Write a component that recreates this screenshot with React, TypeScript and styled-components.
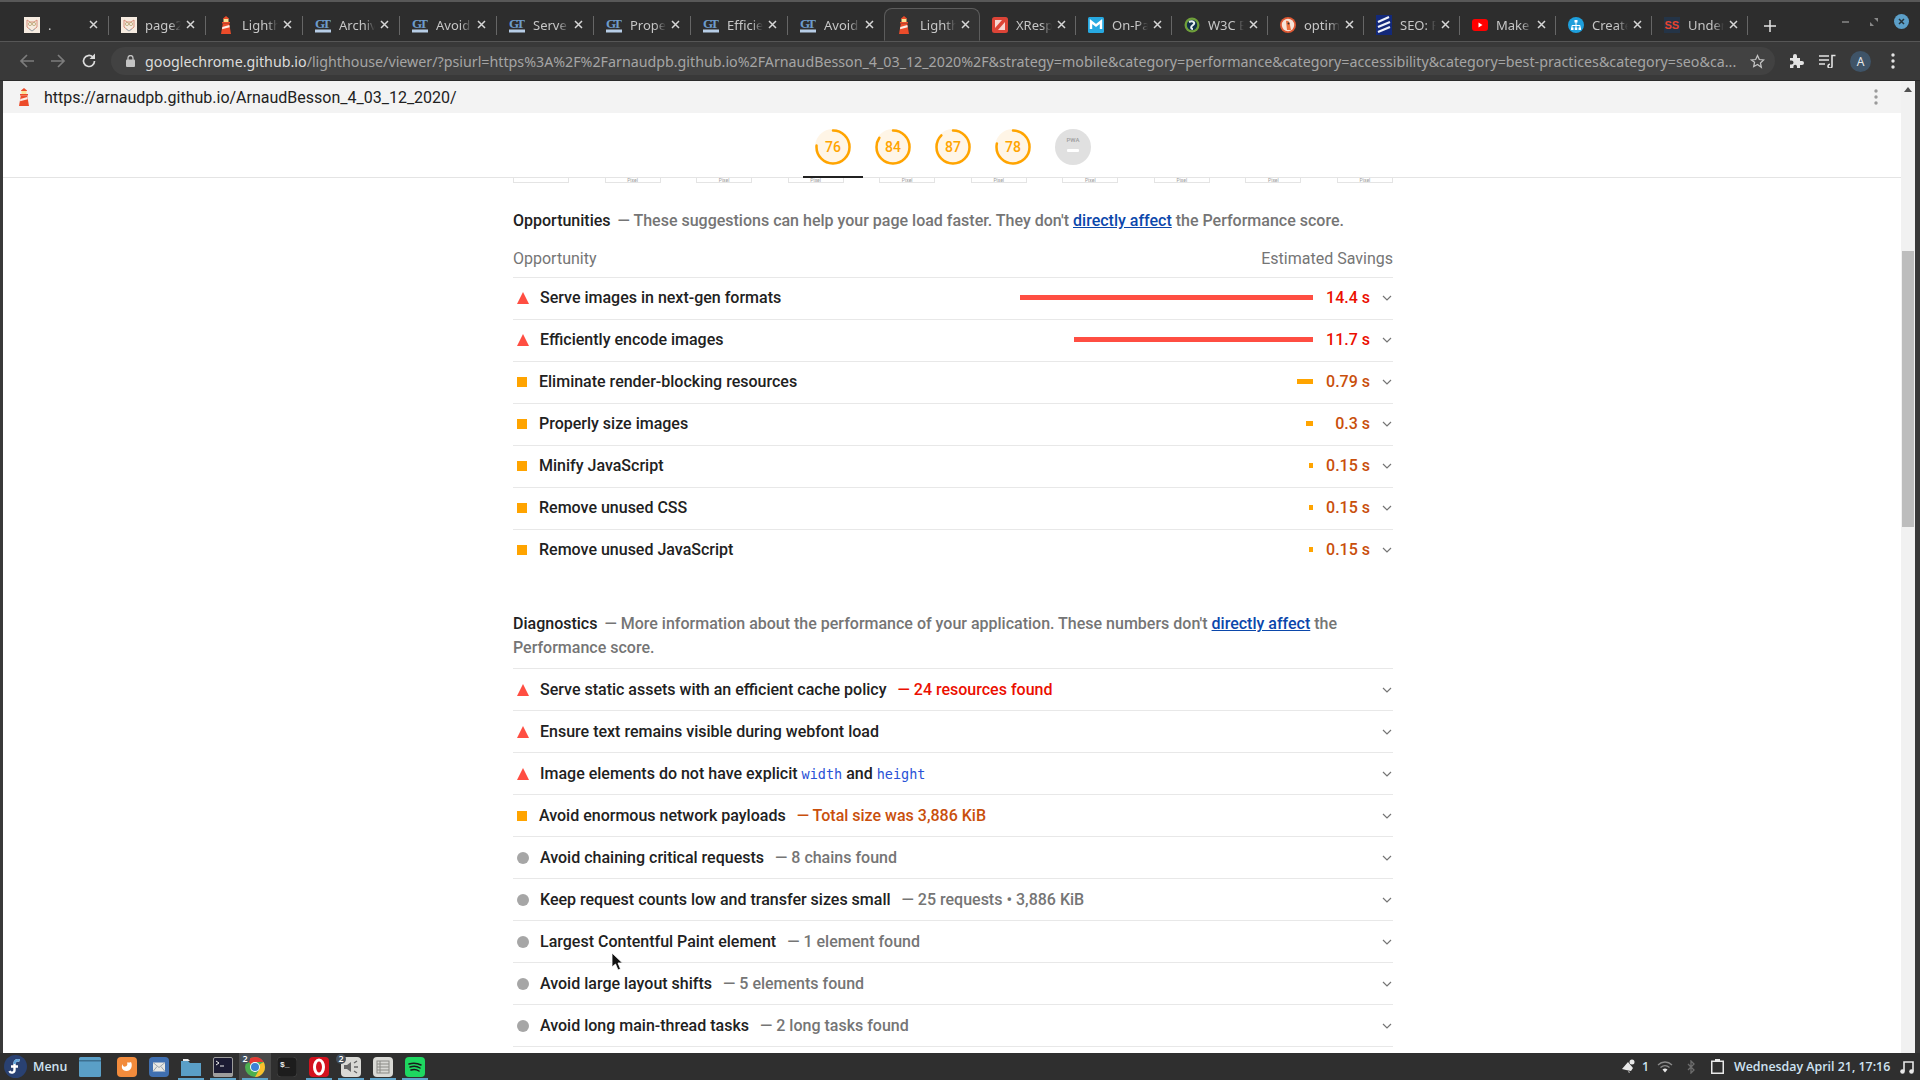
import React from "react";
import styled, { createGlobalStyle } from "styled-components";

const GlobalStyle = createGlobalStyle`
  html, body { margin: 0; padding: 0; height: 100%; overflow: hidden; background: #2d2d2d; }
  * { box-sizing: border-box; }
`;

type FaviconKind =
  | "owl" | "house" | "gt" | "xresp" | "moz" | "w3c" | "duck" | "seo" | "yt" | "create" | "ss";

const Favicon = ({ kind }: { kind: FaviconKind }) => {
  switch (kind) {
    case "owl":
      return (
        <svg width="16" height="16" viewBox="0 0 16 16">
          <rect width="16" height="16" fill="#f6ebe0" />
          <path d="M3 3l3 2h4l3-2v7l-5 4-5-4z" fill="none" stroke="#d9907c" strokeWidth="1" />
          <circle cx="6" cy="7" r="1.6" fill="none" stroke="#b7a472" strokeWidth="0.8" />
          <circle cx="10" cy="7" r="1.6" fill="none" stroke="#b7a472" strokeWidth="0.8" />
          <path d="M5 12l3 2 3-2" fill="none" stroke="#8fb8c8" strokeWidth="0.8" />
        </svg>
      );
    case "house":
      return (
        <svg width="14" height="18" viewBox="0 0 14 18">
          <path d="M7 0l3 2.500V3H4v-.5z" fill="#ec4c2a" />
          <rect x="4.500" y="3" width="5" height="3" fill="#fde293" />
          <rect x="3" y="6" width="8" height="1.500" fill="#ec4c2a" />
          <path d="M3.800 7.500h6.400L12 18H2z" fill="#ec4c2a" />
          <path d="M3.300 11l7-2 .4 2.300L3 13.300z" fill="#fbeee6" />
        </svg>
      );
    case "gt":
      return (
        <svg width="16" height="16" viewBox="0 0 16 16">
          <text x="0" y="11" fontFamily="Liberation Serif, serif" fontWeight="700" fontSize="13" fill="#6d9ccc" textLength="16">GT</text>
          <rect y="12.500" width="16" height="3" fill="#b7cde6" />
        </svg>
      );
    case "xresp":
      return (
        <svg width="16" height="16" viewBox="0 0 16 16">
          <rect width="16" height="16" rx="2.500" fill="#dc4437" />
          <path d="M3 3h7L3 11zM13 13H6l7-8z" fill="#f7d7d3" />
        </svg>
      );
    case "moz":
      return (
        <svg width="16" height="16" viewBox="0 0 16 16">
          <rect width="16" height="16" rx="1.500" fill="#27a9e1" />
          <path d="M3 12V4.500l5 4 5-4V12" fill="none" stroke="#fff" strokeWidth="2.400" />
        </svg>
      );
    case "w3c":
      return (
        <svg width="16" height="16" viewBox="0 0 16 16">
          <circle cx="8" cy="8" r="7.500" fill="#6f9f3a" />
          <circle cx="8" cy="8" r="5.200" fill="#10304a" />
          <path d="M5 5c4-2 7 1 4 3s-2 4 0 4" fill="none" stroke="#e9f2f2" strokeWidth="2" />
        </svg>
      );
    case "duck":
      return (
        <svg width="16" height="16" viewBox="0 0 16 16">
          <circle cx="8" cy="8" r="8" fill="#de5833" />
          <circle cx="8" cy="8" r="6.200" fill="#f6e3d8" />
          <path d="M6 4c3-1 4 2 4 4l1 5H7z" fill="#e8703f" />
          <circle cx="8.500" cy="6.500" r="1" fill="#2d2d2d" />
        </svg>
      );
    case "seo":
      return (
        <svg width="16" height="20" viewBox="0 0 16 20">
          <rect width="16" height="20" fill="#13297a" />
          <path d="M2 7l11-5M2 12l12-5M2 17l12-5" stroke="#eef2fa" strokeWidth="2.200" />
        </svg>
      );
    case "yt":
      return (
        <svg width="16" height="12" viewBox="0 0 16 12">
          <rect width="16" height="12" rx="3" fill="#f00" />
          <path d="M6.500 3.500L10.500 6l-4 2.500z" fill="#fff" />
        </svg>
      );
    case "create":
      return (
        <svg width="16" height="16" viewBox="0 0 16 16">
          <circle cx="8" cy="8" r="8" fill="#1e9fdc" />
          <path d="M8 5v3M4 11V8.500h8V11M8 8.500V11" stroke="#fff" fill="none" />
          <rect x="6.500" y="3" width="3" height="2.500" fill="#fff" />
          <rect x="3" y="10.500" width="2.500" height="2.500" fill="#fff" />
          <rect x="6.800" y="10.500" width="2.500" height="2.500" fill="#fff" />
          <rect x="10.500" y="10.500" width="2.500" height="2.500" fill="#fff" />
        </svg>
      );
    case "ss":
      return (
        <svg width="16" height="16" viewBox="0 0 16 16">
          <rect width="16" height="16" fill="#243447" />
          <text x="0.500" y="12" fontFamily="Liberation Sans, sans-serif" fontWeight="700" fontSize="11" fill="#e8432e">SS</text>
        </svg>
      );
  }
};

const Tab = styled.div<{ $active?: boolean; $sep?: boolean; $narrow?: boolean }>`
  position: relative;
  width: ${({ $narrow }) => ($narrow ? 96 : 97)}px;
  height: 33px;
  display: flex;
  align-items: center;
  flex: none;
  padding-left: 12px;
  border-radius: 8px 8px 0 0;
  ${({ $active }) =>
    $active
      ? "background: #333333; border: 1px solid #5c5c5c; border-bottom-color: #333333; padding-left: 11px; margin-left: -1px; z-index: 1;"
      : ""}
  ${({ $sep }) =>
    $sep ? "&::after { content: ''; position: absolute; right: 0; top: 8px; height: 19px; width: 1px; background: #666; }" : ""}
`;

const TabIcon = styled.div`
  width: 16px;
  height: 20px;
  flex: none;
  display: flex;
  align-items: center;
  justify-content: center;
`;

const TabTitle = styled.div`
  margin-left: 8px;
  width: 36px;
  overflow: hidden;
  white-space: nowrap;
  font: 400 13px "Noto Sans", sans-serif;
  color: #c6c6c6;
  -webkit-mask-image: linear-gradient(90deg, #000 70%, transparent 100%);
  mask-image: linear-gradient(90deg, #000 70%, transparent 100%);
`;

const TabClose = styled.svg`
  margin-left: 5px;
  flex: none;
`;

const Window = styled.div`
  width: 1920px;
  height: 1080px;
  display: flex;
  flex-direction: column;
  overflow: hidden;
  position: relative;
  background: #2d2d2d;
`;

const TabStrip = styled.div`
  height: 42px;
  flex: none;
  display: flex;
  align-items: flex-end;
  padding-left: 12px;
  background: #2d2d2d;
  border-top: 2px solid #585858;
  border-bottom: 1px solid #565656;
  position: relative;
`;

const NewTab = styled.svg`
  flex: none;
  margin: 0 0 9px 16px;
`;

const WindowControls = styled.div`
  margin-left: auto;
  height: 100%;
  display: flex;
  align-items: center;
  gap: 16px;
  padding-right: 11px;
`;

const Toolbar = styled.div`
  height: 39px;
  flex: none;
  background: #393939;
  display: flex;
  align-items: center;
  padding-left: 19px;
  border-bottom: 1px solid #2b2b2b;
`;

const NavButton = styled.svg<{ $gap: number }>`
  flex: none;
  margin-right: ${({ $gap }) => $gap}px;
`;

const Omnibox = styled.div`
  width: 1664px;
  height: 28px;
  border-radius: 14px;
  background: #424242;
  display: flex;
  align-items: center;
  padding: 0 10px 0 15px;
  flex: none;
`;

const UrlText = styled.div`
  margin-left: 10px;
  width: 1600px;
  flex: none;
  white-space: nowrap;
  overflow: hidden;
  font: 400 14.250px "Noto Sans", sans-serif;
  color: #a5a5a5;
`;

const UrlHost = styled.span`
  color: #dcdcdc;
`;

const StarIcon = styled.svg`
  margin-left: auto;
  flex: none;
`;

const ToolbarActions = styled.div`
  display: flex;
  align-items: center;
  margin-left: 14px;
  gap: 14px;
`;

const MoreDots = styled.svg`
  margin-left: 6px;
`;

const Avatar = styled.div`
  width: 21px;
  height: 21px;
  border-radius: 50%;
  background: #3f5468;
  color: #e8e8e8;
  font: 400 12px "Noto Sans", sans-serif;
  display: flex;
  align-items: center;
  justify-content: center;
`;

const Viewport = styled.div`
  flex: 1;
  min-height: 0;
  display: flex;
  padding: 0 3px;
  background: #393939;
`;

const PageColumn = styled.div`
  width: 1898px;
  background: #fff;
  display: flex;
  flex-direction: column;
  overflow: hidden;
`;

const InfoBar = styled.div`
  height: 32px;
  flex: none;
  background: #f3f3f3;
  display: flex;
  align-items: center;
  padding: 0 23px 0 14px;
  font: 400 16px Roboto, sans-serif;
  color: #212121;
`;

const InfoUrl = styled.div`
  margin-left: 13px;
  flex: 1;
`;

const StickyHeader = styled.div`
  height: 65px;
  flex: none;
  border-bottom: 1px solid #e4e4e4;
  display: flex;
  justify-content: center;
  padding-left: 2px;
`;

const GaugeTab = styled.div<{ $active?: boolean }>`
  width: 60px;
  height: 65px;
  padding-top: 16px;
  display: flex;
  justify-content: center;
  border-bottom: 2px solid ${({ $active }) => ($active ? "#212121" : "transparent")};
`;

const GaugeCircle = styled.div`
  position: relative;
  width: 36px;
  height: 36px;
`;

const GaugeScore = styled.div`
  position: absolute;
  inset: 0;
  display: flex;
  align-items: center;
  justify-content: center;
  font: 500 14px Roboto, sans-serif;
  color: #ffa400;
`;

const PwaBadge = styled.div`
  width: 36px;
  height: 36px;
  border-radius: 50%;
  background: #e0e0e0;
  display: flex;
  flex-direction: column;
  align-items: center;
  padding-top: 7px;
  font: 500 6px Roboto, sans-serif;
  color: #9e9e9e;
`;

const PwaDash = styled.div`
  width: 12px;
  height: 3px;
  border-radius: 1px;
  background: #fff;
  margin-top: 6px;
`;

const Report = styled.div`
  width: 880px;
  margin: 0 auto;
  transform: translateX(1px);
  font: 500 16px/24px Roboto, sans-serif;
  color: #757575;
`;

const Filmstrip = styled.div`
  height: 5px;
  display: flex;
  justify-content: space-between;
`;

const FilmThumb = styled.div`
  width: 56px;
  height: 5px;
  border: 1px solid #e4e4e4;
  border-top: none;
  display: flex;
  justify-content: center;
  font: 400 5px/4px Roboto, sans-serif;
  color: #9a9a9a;
  overflow: hidden;
`;

const SectionHead = styled.div<{ $top: number; $bottom: number }>`
  margin-top: ${({ $top }) => $top}px;
  margin-bottom: ${({ $bottom }) => $bottom}px;
`;

const SectionName = styled.span`
  color: #212121;
  margin-right: 3px;
`;

const DocLink = styled.a`
  color: #0b47ab;
  text-decoration: underline;
`;

const ColumnHeads = styled.div`
  display: flex;
  justify-content: space-between;
  height: 30px;
  font-weight: 400;
`;

const AuditRow = styled.div<{ $raised?: boolean }>`
  height: 42px;
  display: flex;
  align-items: center;
  border-top: 1px solid #e8e8e8;
  padding-bottom: ${({ $raised }) => ($raised ? 2 : 0)}px;
`;

const SeverityIcon = styled.div`
  width: 12px;
  flex: none;
  margin-left: 4px;
  display: flex;
  justify-content: center;
`;

const Triangle = styled.div`
  width: 0;
  height: 0;
  border-left: 6px solid transparent;
  border-right: 6px solid transparent;
  border-bottom: 12px solid #ff4e42;
`;

const Square = styled.div`
  width: 10px;
  height: 10px;
  background: #ffa400;
  margin-left: -2px;
`;

const Dot = styled.div`
  width: 12px;
  height: 12px;
  border-radius: 50%;
  background: #a6a6a6;
`;

const AuditTitle = styled.div<{ $square?: boolean }>`
  margin-left: ${({ $square }) => ($square ? 10 : 11)}px;
  color: #212121;
  white-space: nowrap;
`;

const AuditNote = styled.span<{ $tone: string }>`
  margin-left: 11px;
  color: ${({ $tone }) => $tone};
`;

const Mono = styled.code`
  font: 400 13.500px "DejaVu Sans Mono", monospace;
  color: #2a52d6;
`;

const SavingsBar = styled.div<{ $color: string }>`
  margin-left: auto;
  height: 5px;
  background: ${({ $color }) => $color};
`;

const SavingsValue = styled.div<{ $tone: string }>`
  width: 57px;
  text-align: right;
  flex: none;
  color: ${({ $tone }) => $tone};
`;

const Chevron = styled.svg<{ $push?: boolean }>`
  flex: none;
  margin-left: ${({ $push }) => ($push ? "auto" : "12px")};
  margin-right: 1px;
`;

const ScrollTrack = styled.div`
  width: 14px;
  background: #f1f1f1;
  display: flex;
  flex-direction: column;
  align-items: center;
`;

const ScrollArrow = styled.div`
  margin-top: 6px;
  width: 0;
  height: 0;
  border-left: 4px solid transparent;
  border-right: 4px solid transparent;
  border-bottom: 5px solid #505050;
`;

const ScrollThumb = styled.div`
  width: 12px;
  height: 276px;
  margin-top: 159px;
  background: #bdbdbd;
`;

const Taskbar = styled.div`
  height: 27px;
  flex: none;
  background: #2f2f2f;
  display: flex;
  align-items: center;
  padding: 0 4px;
  font: 600 12.400px "Open Sans", "Noto Sans", sans-serif;
  color: #cfe3f2;
`;

const MenuLabel = styled.div`
  margin-left: 6px;
  width: 41px;
`;

const Launcher = styled.div<{ $running?: boolean; $focused?: boolean; $spaced?: boolean }>`
  width: 32px;
  height: 27px;
  margin-right: ${({ $spaced }) => ($spaced ? 5 : 0)}px;
  display: flex;
  align-items: center;
  justify-content: center;
  position: relative;
  background: ${({ $focused }) => ($focused ? "#4a4a4a" : "transparent")};
  &::after {
    content: "";
    position: absolute;
    left: 3px;
    right: 3px;
    bottom: 0;
    height: 2px;
    background: ${({ $running }) => ($running ? "#5ea3c9" : "transparent")};
  }
`;

const LauncherBadge = styled.div`
  position: absolute;
  top: 1px;
  left: 1px;
  width: 10px;
  height: 10px;
  border-radius: 50%;
  background: #44505c;
  color: #fff;
  font: 600 9px/10px "Open Sans", sans-serif;
  text-align: center;
`;

const Tray = styled.div`
  margin-left: auto;
  display: flex;
  align-items: center;
  padding-right: 2px;
`;

const TrayNumber = styled.div`
  margin: 0 8px 0 6px;
  width: 7px;
`;

const BluetoothIcon = styled.svg`
  margin: 0 16px 0 14px;
`;

const TrayClock = styled.div`
  margin: 0 10px 0 10px;
  width: 156px;
  white-space: nowrap;
`;

const Cursor = styled.svg`
  position: absolute;
  left: 611px;
  top: 952px;
`;

const tabs: { kind: FaviconKind; title: string }[] = [
  { kind: "owl", title: "." },
  { kind: "owl", title: "page2" },
  { kind: "house", title: "Lighthouse" },
  { kind: "gt", title: "Archive" },
  { kind: "gt", title: "Avoid" },
  { kind: "gt", title: "Serve" },
  { kind: "gt", title: "Proper" },
  { kind: "gt", title: "Efficient" },
  { kind: "gt", title: "Avoid" },
  { kind: "house", title: "Lighthouse" },
  { kind: "xresp", title: "XResponsive" },
  { kind: "moz", title: "On-Page" },
  { kind: "w3c", title: "W3C Bad" },
  { kind: "duck", title: "optimize" },
  { kind: "seo", title: "SEO: Full" },
  { kind: "yt", title: "Make" },
  { kind: "create", title: "Create" },
  { kind: "ss", title: "Understand" },
];

const ACTIVE_TAB = 9;

const scores = [76, 84, 87, 78];

const RED = "#eb0f00";
const ORANGE = "#c94f0c";
const GREY = "#757575";

const opportunities = [
  { sev: "fail", title: "Serve images in next-gen formats", bar: 293, value: "14.4 s" },
  { sev: "fail", title: "Efficiently encode images", bar: 239, value: "11.7 s" },
  { sev: "avg", title: "Eliminate render-blocking resources", bar: 16, value: "0.79 s" },
  { sev: "avg", title: "Properly size images", bar: 7, value: "0.3 s" },
  { sev: "avg", title: "Minify JavaScript", bar: 4, value: "0.15 s" },
  { sev: "avg", title: "Remove unused CSS", bar: 4, value: "0.15 s" },
  { sev: "avg", title: "Remove unused JavaScript", bar: 4, value: "0.15 s" },
];

const diagnostics: { sev: string; title: React.ReactNode; note?: string; tone?: string }[] = [
  { sev: "fail", title: "Serve static assets with an efficient cache policy", note: "— 24 resources found", tone: RED },
  { sev: "fail", title: "Ensure text remains visible during webfont load" },
  {
    sev: "fail",
    title: (
      <>
        Image elements do not have explicit <Mono>width</Mono> and <Mono>height</Mono>
      </>
    ),
  },
  { sev: "avg", title: "Avoid enormous network payloads", note: "— Total size was 3,886 KiB", tone: ORANGE },
  { sev: "info", title: "Avoid chaining critical requests", note: "— 8 chains found", tone: GREY },
  { sev: "info", title: "Keep request counts low and transfer sizes small", note: "— 25 requests • 3,886 KiB", tone: GREY },
  { sev: "info", title: "Largest Contentful Paint element", note: "— 1 element found", tone: GREY },
  { sev: "info", title: "Avoid large layout shifts", note: "— 5 elements found", tone: GREY },
  { sev: "info", title: "Avoid long main-thread tasks", note: "— 2 long tasks found", tone: GREY },
];

const Severity = ({ sev }: { sev: string }) => (
  <SeverityIcon>
    {sev === "fail" && <Triangle />}
    {sev === "avg" && <Square />}
    {sev === "info" && <Dot />}
  </SeverityIcon>
);

const AuditChevron = ({ push }: { push?: boolean }) => (
  <Chevron $push={push} width="10" height="6" viewBox="0 0 10 6">
    <path d="M1 1l4 4 4-4" fill="none" stroke="#757575" strokeWidth="1.200" />
  </Chevron>
);

const Gauge = ({ score }: { score: number }) => {
  const r = 16.5;
  const len = 2 * Math.PI * r;
  return (
    <GaugeCircle>
      <svg width="36" height="36" viewBox="0 0 36 36">
        <circle cx="18" cy="18" r="18" fill="#fff5e6" />
        <circle
          cx="18"
          cy="18"
          r={r}
          fill="none"
          stroke="#ffa400"
          strokeWidth="2.500"
          strokeLinecap="round"
          strokeDasharray={`${(len * score) / 100} ${len}`}
          transform="rotate(-90 18 18)"
        />
      </svg>
      <GaugeScore>{score}</GaugeScore>
    </GaugeCircle>
  );
};

const launchers: { icon: React.ReactNode; running?: boolean; focused?: boolean; badge?: string; spaced?: boolean }[] = [
  {
    spaced: true,
    icon: (
      <svg width="22" height="20" viewBox="0 0 22 20">
        <rect width="22" height="20" rx="1.500" fill="#5a9fc7" />
        <rect width="22" height="1.500" y="3" fill="#3c6f8f" />
      </svg>
    ),
  },
  {
    icon: (
      <svg width="20" height="20" viewBox="0 0 20 20">
        <rect width="20" height="20" rx="4" fill="#f28b3c" />
        <path d="M14 5c2 4 0 9-4.500 9S4 10 5.500 7c0 2 1.500 3 3 2.500s2.500-2 1.500-4c2 0 3.500 0 4-.5z" fill="#fff" />
      </svg>
    ),
  },
  {
    icon: (
      <svg width="20" height="20" viewBox="0 0 20 20">
        <rect width="20" height="20" rx="4" fill="#3f6fb0" />
        <rect x="4" y="5.500" width="12" height="9" fill="#e8e8e4" />
        <path d="M4 5.500l6 5 6-5M4 14.500l4-5M16 14.500l-4-5" fill="none" stroke="#9aa3ad" />
      </svg>
    ),
  },
  {
    running: true,
    icon: (
      <svg width="22" height="20" viewBox="0 0 22 20">
        <path d="M1 4h7l2 2h11v13H1z" fill="#5a9fc7" />
        <path d="M3 2h5l2 2H3z" fill="#e9e9e9" />
      </svg>
    ),
  },
  {
    running: true,
    icon: (
      <svg width="20" height="20" viewBox="0 0 20 20">
        <rect x="0.500" y="0.500" width="19" height="19" rx="1.500" fill="#1b1b33" stroke="#9d9d9d" />
        <rect x="0.500" y="16" width="19" height="3.500" fill="#9d9d9d" />
        <path d="M3 4l3 2-3 2M7 9h4" fill="none" stroke="#eee" />
      </svg>
    ),
  },
  {
    running: true,
    focused: true,
    badge: "2",
    icon: (
      <svg width="20" height="20" viewBox="0 0 20 20">
        <circle cx="10" cy="10" r="10" fill="#4caf50" />
        <path d="M10 0a10 10 0 0 1 8.660 5H10a5 5 0 0 0-4.330 2.500L2.930 2.930A10 10 0 0 1 10 0z" fill="#e53935" />
        <path d="M18.660 5A10 10 0 0 1 10 20l4.330-7.500A5 5 0 0 0 14.330 7.500z" fill="#fbc02d" />
        <circle cx="10" cy="10" r="5" fill="#fff" />
        <circle cx="10" cy="10" r="4" fill="#3b82d6" />
      </svg>
    ),
  },
  {
    icon: (
      <svg width="20" height="20" viewBox="0 0 20 20">
        <rect width="20" height="20" rx="4" fill="#1d1d1d" stroke="#3c3c3c" />
        <text x="3" y="10" fontFamily="Liberation Mono, monospace" fontSize="8" fill="#eee">$_</text>
      </svg>
    ),
  },
  {
    running: true,
    icon: (
      <svg width="20" height="20" viewBox="0 0 20 20">
        <rect width="20" height="20" rx="4" fill="#d3121e" />
        <ellipse cx="10" cy="10" rx="4.500" ry="7" fill="none" stroke="#fff" strokeWidth="3" />
      </svg>
    ),
  },
  {
    running: true,
    badge: "2",
    icon: (
      <svg width="20" height="20" viewBox="0 0 20 20">
        <rect width="20" height="20" rx="4" fill="#d9d9d5" />
        <path d="M3 8h3l4-3v10l-4-3H3z" fill="#666" />
        <path d="M13 6l3-2M13 10h4M13 14l3 2" stroke="#666" strokeWidth="1.400" />
      </svg>
    ),
  },
  {
    running: true,
    icon: (
      <svg width="20" height="20" viewBox="0 0 20 20">
        <rect width="20" height="20" rx="4" fill="#d9d9d5" />
        <rect x="4" y="4" width="12" height="12" fill="none" stroke="#8a8a85" />
        <path d="M4 7h12M4 10h12M4 13h12M7 4v12" stroke="#8a8a85" />
      </svg>
    ),
  },
  {
    running: true,
    icon: (
      <svg width="20" height="20" viewBox="0 0 20 20">
        <rect width="20" height="20" rx="4" fill="#1ed760" />
        <path d="M4 7c4-1 8-1 12 1M5 10c3-1 7-1 10 1M6 13c3-1 5-1 8 1" fill="none" stroke="#1a1a1a" strokeWidth="1.500" strokeLinecap="round" />
      </svg>
    ),
  },
];

const App = () => (
  <Window>
    <GlobalStyle />
    <TabStrip>
      {tabs.map((tab, i) => (
        <Tab
          key={i}
          $active={i === ACTIVE_TAB}
          $narrow={i >= ACTIVE_TAB}
          $sep={i !== ACTIVE_TAB && i !== ACTIVE_TAB - 1}
        >
          <TabIcon>
            <Favicon kind={tab.kind} />
          </TabIcon>
          <TabTitle>{tab.title}</TabTitle>
          <TabClose width="9" height="9" viewBox="0 0 9 9">
            <path d="M1 1l7 7M8 1l-7 7" stroke="#d6d6d6" strokeWidth="1.500" />
          </TabClose>
        </Tab>
      ))}
      <NewTab width="12" height="12" viewBox="0 0 12 12">
        <path d="M6 0v12M0 6h12" stroke="#e4e4e4" strokeWidth="1.500" />
      </NewTab>
      <WindowControls>
        <svg width="12" height="8" viewBox="0 0 12 8">
          <path d="M0 4h7" stroke="#888" strokeWidth="1.500" />
        </svg>
        <svg width="8" height="8" viewBox="0 0 8 8">
          <path d="M4 0h4v4zM4 8H0V4z" fill="#888" />
        </svg>
        <svg width="15" height="15" viewBox="0 0 15 15">
          <circle cx="7.500" cy="7.500" r="7.500" fill="#5c9fc8" />
          <path d="M5 5l5 5M10 5l-5 5" stroke="#263238" strokeWidth="1.500" />
        </svg>
      </WindowControls>
    </TabStrip>
    <Toolbar>
      <NavButton $gap={11} width="18" height="16" viewBox="0 0 18 16">
        <path d="M15 8H2M8 2L2 8l6 6" fill="none" stroke="#7c7c7c" strokeWidth="1.700" />
      </NavButton>
      <NavButton $gap={15} width="18" height="16" viewBox="0 0 18 16">
        <path d="M3 8h13M10 2l6 6-6 6" fill="none" stroke="#7c7c7c" strokeWidth="1.700" />
      </NavButton>
      <NavButton $gap={14} width="16" height="16" viewBox="0 0 16 16">
        <path d="M13.500 8a5.500 5.500 0 1 1-1.700-4" fill="none" stroke="#dcdcdc" strokeWidth="1.700" />
        <path d="M14 0.500V6H8.500z" fill="#dcdcdc" />
      </NavButton>
      <Omnibox>
        <svg width="9" height="12" viewBox="0 0 9 12">
          <rect y="4.500" width="9" height="7.500" rx="1" fill="#c4c4c4" />
          <path d="M2 5V3a2.500 2.500 0 0 1 5 0v2" fill="none" stroke="#c4c4c4" strokeWidth="1.300" />
        </svg>
        <UrlText>
          <UrlHost>googlechrome.github.io</UrlHost>
          /lighthouse/viewer/?psiurl=https%3A%2F%2Farnaudpb.github.io%2FArnaudBesson_4_03_12_2020%2F&strategy=mobile&category=performance&category=accessibility&category=best-practices&category=seo&ca...
        </UrlText>
        <StarIcon width="15" height="15" viewBox="0 0 24 24">
          <path d="M12 2.500l2.900 6.300 6.900.8-5.100 4.700 1.400 6.800L12 16.700l-6.100 3.400 1.400-6.800L2.200 9.600l6.900-.8z" fill="none" stroke="#c4c4c4" strokeWidth="2" />
        </StarIcon>
      </Omnibox>
      <ToolbarActions>
        <svg width="16" height="16" viewBox="0 0 16 16">
          <path d="M1 5h3V3a2 2 0 0 1 4 0v2h3v3h2a2 2 0 0 1 0 4h-2v3H8v-1.500a1.800 1.800 0 0 0-3.600 0V15H1v-3.500h1.500a2 2 0 0 0 0-4H1z" fill="#e4e4e4" />
        </svg>
        <svg width="17" height="14" viewBox="0 0 17 14">
          <path d="M0 2h10M0 6h10M0 10h6" stroke="#e4e4e4" strokeWidth="1.600" />
          <path d="M13 12V1.500h3.500M13 12a2 2 0 1 1-2-1.800" fill="none" stroke="#e4e4e4" strokeWidth="1.600" />
        </svg>
        <Avatar>A</Avatar>
        <MoreDots width="4" height="16" viewBox="0 0 4 16">
          <circle cx="2" cy="2" r="1.700" fill="#e4e4e4" />
          <circle cx="2" cy="8" r="1.700" fill="#e4e4e4" />
          <circle cx="2" cy="14" r="1.700" fill="#e4e4e4" />
        </MoreDots>
      </ToolbarActions>
    </Toolbar>
    <Viewport>
      <PageColumn>
        <InfoBar>
          <Favicon kind="house" />
          <InfoUrl>https://arnaudpb.github.io/ArnaudBesson_4_03_12_2020/</InfoUrl>
          <svg width="4" height="16" viewBox="0 0 4 16">
            <circle cx="2" cy="2" r="1.700" fill="#9a9a9a" />
            <circle cx="2" cy="8" r="1.700" fill="#9a9a9a" />
            <circle cx="2" cy="14" r="1.700" fill="#9a9a9a" />
          </svg>
        </InfoBar>
        <StickyHeader>
          {scores.map((score, i) => (
            <GaugeTab key={score} $active={i === 0}>
              <Gauge score={score} />
            </GaugeTab>
          ))}
          <GaugeTab>
            <PwaBadge>
              PWA
              <PwaDash />
            </PwaBadge>
          </GaugeTab>
        </StickyHeader>
        <Report>
          <Filmstrip>
            {Array.from({ length: 10 }).map((_, i) => (
              <FilmThumb key={i}>{i > 0 && "Pixel"}</FilmThumb>
            ))}
          </Filmstrip>
          <SectionHead $top={26} $bottom={14}>
            <SectionName>Opportunities</SectionName> — These suggestions can help your page load faster. They don't{" "}
            <DocLink>directly affect</DocLink> the Performance score.
          </SectionHead>
          <ColumnHeads>
            <div>Opportunity</div>
            <div>Estimated Savings</div>
          </ColumnHeads>
          {opportunities.map((audit) => {
            const tone = audit.sev === "fail" ? RED : ORANGE;
            return (
              <AuditRow key={audit.title} $raised>
                <Severity sev={audit.sev} />
                <AuditTitle $square={audit.sev === "avg"}>{audit.title}</AuditTitle>
                <SavingsBar
                  $color={audit.sev === "fail" ? "#ff4e42" : "#ffa400"}
                  style={{ width: audit.bar }}
                />
                <SavingsValue $tone={tone}>{audit.value}</SavingsValue>
                <AuditChevron />
              </AuditRow>
            );
          })}
          <SectionHead $top={41} $bottom={8}>
            <SectionName>Diagnostics</SectionName> — More information about the performance of your application. These numbers don't{" "}
            <DocLink>directly affect</DocLink> the Performance score.
          </SectionHead>
          {diagnostics.map((audit, i) => (
            <AuditRow key={i}>
              <Severity sev={audit.sev} />
              <AuditTitle $square={audit.sev === "avg"}>
                {audit.title}
                {audit.note && <AuditNote $tone={audit.tone as string}>{audit.note}</AuditNote>}
              </AuditTitle>
              <AuditChevron push />
            </AuditRow>
          ))}
          <AuditRow />
        </Report>
      </PageColumn>
      <ScrollTrack>
        <ScrollArrow />
        <ScrollThumb />
      </ScrollTrack>
    </Viewport>
    <Taskbar>
      <svg width="23" height="23" viewBox="0 0 23 23">
        <circle cx="11.500" cy="11.500" r="11.500" fill="#294172" />
        <path d="M15.500 5.500c-3-1-5 .5-5 3.500v6c0 3-4 3.500-5 1M7 11.500h7" fill="none" stroke="#fff" strokeWidth="2.400" />
        <path d="M10.500 9c0-3 2-4.500 5-3.500" fill="none" stroke="#5ea3dc" strokeWidth="2.400" />
      </svg>
      <MenuLabel>Menu</MenuLabel>
      {launchers.map((item, i) => (
        <Launcher key={i} $running={item.running} $focused={item.focused} $spaced={item.spaced}>
          {item.icon}
          {item.badge && <LauncherBadge>{item.badge}</LauncherBadge>}
        </Launcher>
      ))}
      <Tray>
        <svg width="15" height="15" viewBox="0 0 15 15">
          <path d="M1 10l6-7 5 6-2 3-5-1zM7 12l2 1-1 1z" fill="#e8e8e8" />
          <circle cx="11" cy="3" r="2.500" fill="#e8e8e8" />
        </svg>
        <TrayNumber>1</TrayNumber>
        <svg width="16" height="12" viewBox="0 0 16 12">
          <path d="M1 4c4-4 10-4 14 0M3.500 6.500c3-2.500 6-2.500 9 0" fill="none" stroke="#8a8a8a" strokeWidth="1.300" />
          <path d="M5.500 8.500c2-1.500 3-1.500 5 0L8 11.500z" fill="#e8e8e8" />
        </svg>
        <BluetoothIcon width="8" height="14" viewBox="0 0 8 14">
          <path d="M1 4l6 6-3 3V1l3 3-6 6" fill="none" stroke="#6d6d6d" strokeWidth="1.300" />
        </BluetoothIcon>
        <svg width="13" height="15" viewBox="0 0 13 15">
          <rect x="0.750" y="2.250" width="11.500" height="12" fill="none" stroke="#e8e8e8" strokeWidth="1.500" />
          <rect x="4" y="0" width="5" height="2" fill="#e8e8e8" />
        </svg>
        <TrayClock>Wednesday April 21, 17:16</TrayClock>
        <svg width="14" height="14" viewBox="0 0 14 14">
          <path d="M4 11V2h9v9" fill="none" stroke="#e8e8e8" strokeWidth="1.600" />
          <circle cx="2.500" cy="11.500" r="2.300" fill="#e8e8e8" />
          <circle cx="11.500" cy="11.500" r="2.300" fill="#e8e8e8" />
        </svg>
      </Tray>
    </Taskbar>
    <Cursor width="12" height="19" viewBox="0 0 12 19">
      <path d="M1 1v14l3.500-3 2.500 6 2.500-1-2.500-6h4.500z" fill="#111" stroke="#fff" strokeWidth="0.800" />
    </Cursor>
  </Window>
);

export default App;
